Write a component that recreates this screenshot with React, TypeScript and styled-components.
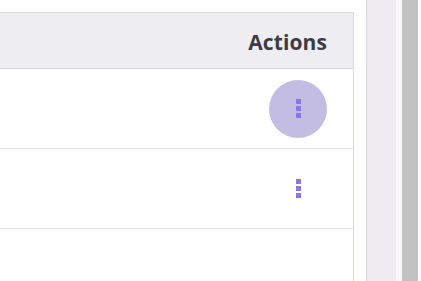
import React from "react";
import styled, { createGlobalStyle } from "styled-components";

const Global = createGlobalStyle`
  html, body { margin: 0; padding: 0; background: #ffffff; }
  body { font-family: "Open Sans", "Noto Sans", sans-serif; }
`;

const Page = styled.div`
  width: 421px;
  height: 281px;
  display: flex;
  overflow: hidden;
  background: #ffffff;
`;

const Main = styled.div`
  width: 354px;
  padding-top: 12px;
  flex-shrink: 0;
`;

const Table = styled.div`
  border-top: 1px solid #d9d9df;
  border-right: 1px solid #d9d9df;
  display: flex;
  flex-direction: column;
`;

const HeaderRow = styled.div`
  height: 55px;
  background: #ededf2;
  border-bottom: 1px solid #d9d9df;
  display: flex;
  align-items: center;
  justify-content: flex-end;
  padding-right: 26px;
`;

const HeaderCell = styled.div`
  font-size: 21px;
  font-weight: 700;
  color: #3c3c44;
  letter-spacing: 0.1px;
  margin-top: 2px;
`;

const Row = styled.div`
  height: 79px;
  border-bottom: 1px solid #e3e3e8;
  display: flex;
  align-items: center;
  justify-content: flex-end;
  padding-right: 26px;
`;

const MenuButton = styled.button<{ $active?: boolean }>`
  width: 58px;
  height: 58px;
  border-radius: 50%;
  border: none;
  padding: 0;
  background: ${(p) => (p.$active ? "#c3bde4" : "transparent")};
  display: flex;
  flex-direction: column;
  align-items: center;
  justify-content: center;
  gap: 2px;
  cursor: pointer;
`;

const Dot = styled.span`
  width: 5px;
  height: 5px;
  background: #8a76e8;
  display: block;
`;

const Gap = styled.div`
  width: 12px;
  flex-shrink: 0;
`;

const SidePanel = styled.div`
  width: 29px;
  flex-shrink: 0;
  background: #eeecf0;
  border-left: 1px solid #d6d4da;
`;

const Track = styled.div`
  width: 6px;
  flex-shrink: 0;
  background: #f8f8f8;
`;

const Thumb = styled.div`
  width: 16px;
  flex-shrink: 0;
  background: #c2c2c2;
`;

const Tail = styled.div`
  flex: 1;
  background: #ffffff;
`;

const Dots = () => (
  <>
    <Dot />
    <Dot />
    <Dot />
  </>
);

export default function App() {
  return (
    <>
      <Global />
      <Page>
        <Main>
          <Table>
            <HeaderRow>
              <HeaderCell>Actions</HeaderCell>
            </HeaderRow>
            <Row>
              <MenuButton $active aria-label="More actions">
                <Dots />
              </MenuButton>
            </Row>
            <Row>
              <MenuButton aria-label="More actions">
                <Dots />
              </MenuButton>
            </Row>
            <Row />
          </Table>
        </Main>
        <Gap />
        <SidePanel />
        <Track />
        <Thumb />
        <Tail />
      </Page>
    </>
  );
}
